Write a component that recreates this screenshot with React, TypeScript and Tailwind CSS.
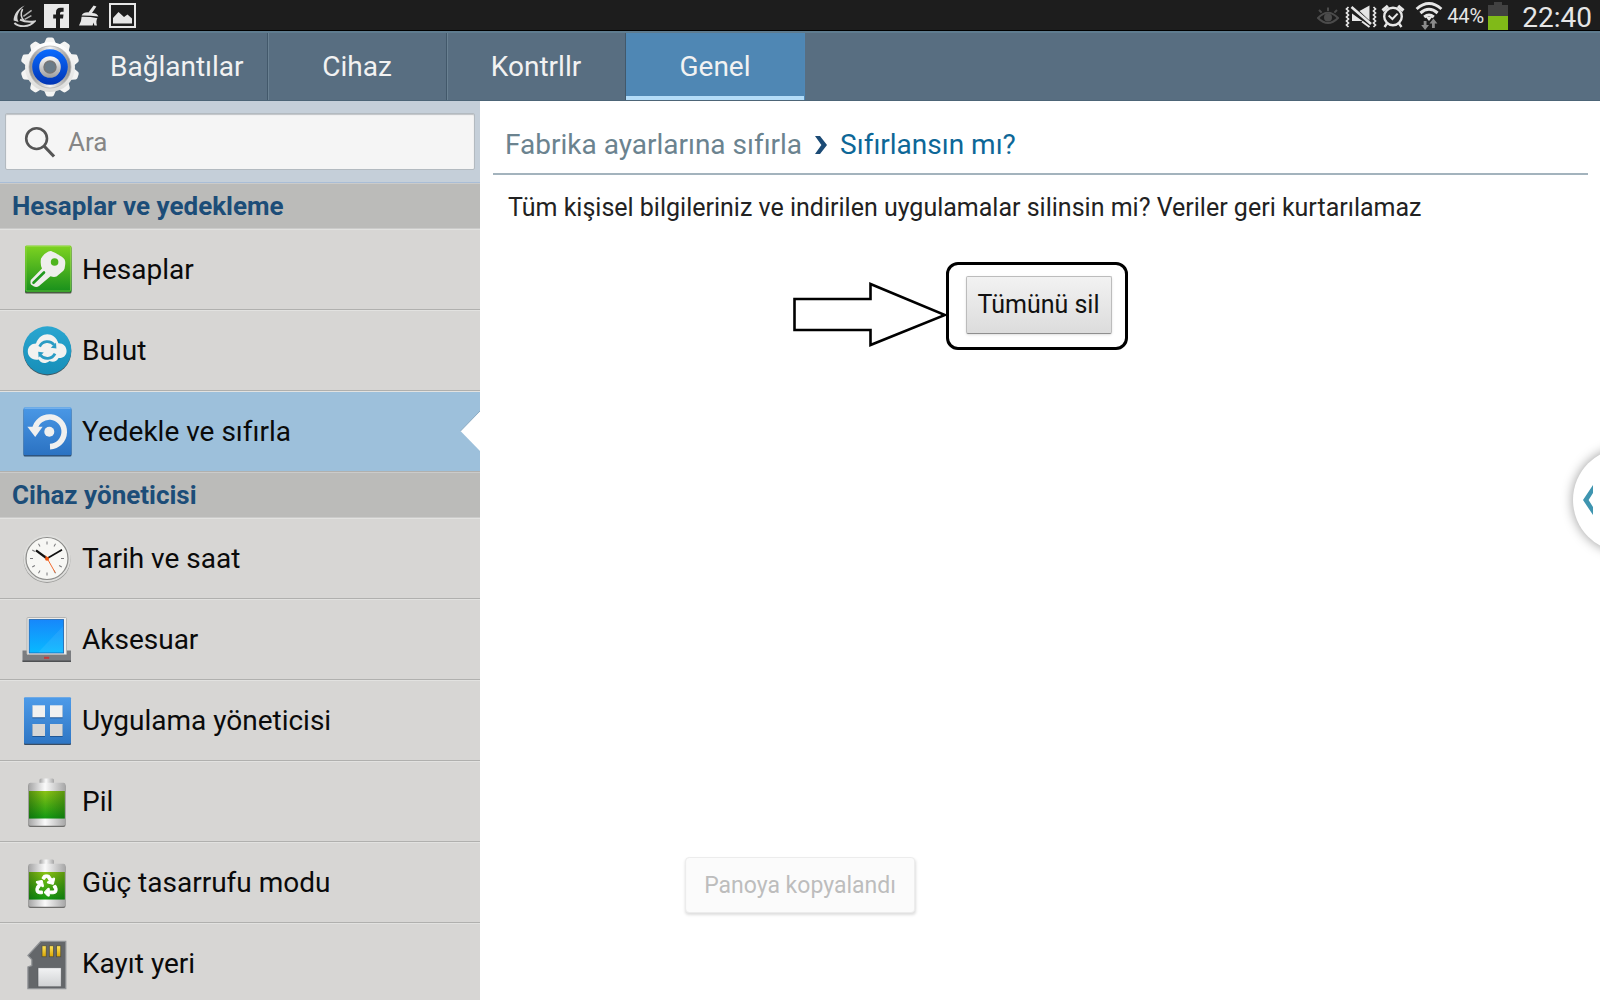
import type { ReactNode } from "react";
import { FaRecycle } from "react-icons/fa";

interface SettingItem {
  label: string;
  icon: ReactNode;
  selected?: boolean;
}

interface SettingSection {
  title: string;
  items: SettingItem[];
}

interface GradientProps {
  id: string;
  from: string;
  to: string;
}

const Gradient: React.FC<GradientProps> = ({ id, from, to }) => (
  <linearGradient id={id} x1="0" y1="0" x2="0" y2="1">
    <stop offset="0" stopColor={from} />
    <stop offset="1" stopColor={to} />
  </linearGradient>
);

const ItemSvg: React.FC<{ children: ReactNode }> = ({ children }) => (
  <svg className="h-[52px] w-[50px] shrink-0" viewBox="0 0 50 52" aria-hidden="true">
    {children}
  </svg>
);

const KeyIcon = () => (
  <ItemSvg>
    <defs>
      <Gradient id="key-bg" from="#7ed321" to="#178f1c" />
    </defs>
    <rect x="3" y="2.5" width="46.5" height="47" rx="1.5" fill="#4a5a42" />
    <rect x="3" y="1.5" width="46.5" height="46.5" rx="1.5" fill="url(#key-bg)" />
    <rect x="4" y="2.5" width="44.5" height="44.5" rx="1" fill="none" stroke="#a6e25c" strokeOpacity="0.5" />
    <path
      d="M28.6 7 C30 7 41 12.5 42.6 15.5 C43.6 17.5 43.4 20 42.6 24.5 Q42 26.5 40.5 27.5 L34.5 32.5 Q32 33.5 28.5 32.3 L17 42 Q15 43.4 12 42.6 L9 40.6 Q8 38.5 8.8 36 L20 24.5 Q18 20.5 19 14.5 Q23 8 28.6 7Z"
      fill="#eeeeec"
    />
    <circle cx="32.6" cy="18" r="3.8" fill="#4fb51f" />
    <path d="M11.5 38.8 L22 28.5" stroke="#219a1f" strokeWidth="2.6" strokeLinecap="round" />
  </ItemSvg>
);

const CloudIcon = () => (
  <ItemSvg>
    <defs>
      <Gradient id="cloud-bg" from="#2aa6d0" to="#178fb9" />
    </defs>
    <circle cx="25.3" cy="26.4" r="24" fill="#3f5a66" />
    <circle cx="25.3" cy="25.3" r="24" fill="url(#cloud-bg)" />
    <path
      d="M14 18.6 C16 12 21 9.2 25.3 9.2 C30 9.2 34.6 12.2 36.4 18.2 C41 18 44.6 21.4 44.6 26 C44.6 30.6 41 33.4 36.6 33 C35 36.4 31.4 37.6 27.4 36 C23.6 39.4 18.4 38.4 16.8 34.6 C10.4 36 5.8 31.8 5.8 26.6 C5.8 21.8 9.4 18.6 14 18.6Z"
      fill="#f2f2f0"
    />
    <g fill="none" stroke="#2a9cc4" strokeWidth="2.8">
      <path d="M17.6 21.6 A8.6 8.6 0 0 1 32.2 20" />
      <path d="M33 28.6 A8.6 8.6 0 0 1 18.4 30" />
    </g>
    <path d="M28.8 22.8 L34.4 23.4 L34 17.8Z M21.8 27.4 L16.2 26.8 L16.6 32.4Z" fill="#2a9cc4" />
  </ItemSvg>
);

const ResetIcon = () => (
  <ItemSvg>
    <defs>
      <Gradient id="reset-bg" from="#4a98e6" to="#2b72c2" />
    </defs>
    <rect x="1.5" y="2.5" width="48" height="48" rx="1.5" fill="#2d4a6a" />
    <rect x="1.5" y="1.3" width="48" height="48" rx="1.5" fill="url(#reset-bg)" />
    <path d="M2.5 2.2 H48.5" stroke="#a4ccf2" strokeOpacity="0.7" />
    <path d="M12.8 23.5 A14.8 14.8 0 1 1 28 40.6" fill="none" stroke="#f0f0ef" strokeWidth="5.6" />
    <path d="M5.4 20.8 H20.6 L13.2 31Z" fill="#f0f0ef" />
    <circle cx="27.3" cy="25.8" r="5" fill="#f0f0ef" />
  </ItemSvg>
);

const ClockIcon = () => (
  <ItemSvg>
    <circle cx="25" cy="26.4" r="23.5" fill="#9a9a98" />
    <circle cx="25" cy="25.5" r="23.5" fill="#dededc" />
    <circle cx="25" cy="25.5" r="21" fill="#f7f7f4" stroke="#8c8c8a" strokeWidth="1.2" />
    {Array.from({ length: 12 }, (_, i) => (
      <path key={i} d="M25 8.5 V11.5" stroke="#77777a" transform={`rotate(${i * 30} 25 25.5)`} />
    ))}
    <path d="M25 25.5 L14 17.3" stroke="#111" strokeWidth="2.2" />
    <path d="M25 25.5 L40 16.8" stroke="#111" strokeWidth="1.7" />
    <path d="M23.6 22.6 L33.2 39.6" stroke="#f26a2e" />
    <circle cx="25" cy="25.8" r="2" fill="#f2560f" />
  </ItemSvg>
);

const AccessoryIcon = () => (
  <ItemSvg>
    <defs>
      <Gradient id="screen" from="#1787fb" to="#08b9ff" />
    </defs>
    <path d="M0.5 36.5 H5 V40.5 H44.5 V36.5 H49 V47.5 H0.5Z" fill="#7b7d80" />
    <path d="M0.5 47.3 H49" stroke="#4e5052" strokeWidth="1.4" />
    <rect x="5" y="3.5" width="39.5" height="37" rx="1" fill="#ededeb" stroke="#b5b5b3" />
    <rect x="7.2" y="5.6" width="34.4" height="33.4" fill="url(#screen)" stroke="#1b62ad" strokeWidth="0.8" />
    <path d="M41.2 12 V38.6 H16Z" fill="#fff" fillOpacity="0.07" />
    <rect x="22" y="42.8" width="5.2" height="2" fill="#c23a3a" />
  </ItemSvg>
);

const AppsIcon = () => (
  <ItemSvg>
    <defs>
      <Gradient id="apps-bg" from="#4d9be9" to="#2e76c4" />
    </defs>
    <rect x="2" y="3" width="47" height="47" rx="1" fill="#3a4d62" />
    <rect x="2" y="2.2" width="47" height="46.6" rx="1" fill="url(#apps-bg)" />
    <g fill="#1f5796">
      <rect x="10.4" y="11.3" width="12.6" height="12" />
      <rect x="28" y="11.3" width="12.6" height="12" />
      <rect x="10.4" y="30" width="12.6" height="12" />
      <rect x="28" y="30" width="12.6" height="12" />
    </g>
    <g fill="#f1f1f0">
      <rect x="10.4" y="10.3" width="12.6" height="12" />
      <rect x="28" y="10.3" width="12.6" height="12" />
    </g>
    <g fill="#d6d6d5">
      <rect x="10.4" y="29" width="12.6" height="12" />
      <rect x="28" y="29" width="12.6" height="12" />
    </g>
  </ItemSvg>
);

const BatteryBody: React.FC<{ id: string }> = ({ id }) => (
  <>
    <defs>
      <linearGradient id={`${id}-metal`} x1="0" y1="0" x2="1" y2="0">
        <stop offset="0" stopColor="#a3a3a3" />
        <stop offset="0.45" stopColor="#fafafa" />
        <stop offset="1" stopColor="#a6a6a6" />
      </linearGradient>
      <Gradient id={`${id}-charge`} from="#8cc414" to="#129a12" />
      <linearGradient id={`${id}-shade`} x1="0" y1="0" x2="1" y2="0">
        <stop offset="0" stopColor="#063f06" stopOpacity="0.4" />
        <stop offset="0.45" stopColor="#063f06" stopOpacity="0" />
        <stop offset="1" stopColor="#063f06" stopOpacity="0.35" />
      </linearGradient>
    </defs>
    <rect x="17.5" y="2.5" width="14.5" height="6" rx="1.5" fill={`url(#${id}-metal)`} />
    <rect x="6.3" y="8" width="37.2" height="43" rx="2" fill="#6e6e6c" />
    <rect x="6.3" y="6.8" width="37.2" height="43" rx="2" fill={`url(#${id}-metal)`} />
    <rect x="7" y="15" width="35.8" height="27.5" fill={`url(#${id}-charge)`} />
    <rect x="7" y="15" width="35.8" height="27.5" fill={`url(#${id}-shade)`} />
  </>
);

const BatteryIcon = () => (
  <ItemSvg>
    <BatteryBody id="battery" />
  </ItemSvg>
);

const PowerSavingIcon = () => (
  <ItemSvg>
    <BatteryBody id="saver" />
    <FaRecycle x="13.5" y="17.5" size={22} color="#ffffff" stroke="#ffffff" strokeWidth="24" />
  </ItemSvg>
);

const StorageIcon = () => (
  <ItemSvg>
    <defs>
      <Gradient id="sd-pin" from="#ffe45c" to="#d9a400" />
      <Gradient id="sd-label" from="#f2f3f4" to="#cfd1d3" />
    </defs>
    <path
      d="M18.8 3.4 H43.8 V50.6 H5.9 V29 L9.8 27.6 V21.6 L5.9 17.6Z"
      fill="#64676a"
      stroke="#909396"
      strokeWidth="1.2"
    />
    <g fill="url(#sd-pin)" stroke="#4a4a3c" strokeWidth="0.7">
      <rect x="20" y="7.8" width="4.2" height="11" />
      <rect x="27.3" y="7.8" width="4.2" height="11" />
      <rect x="34.6" y="7.8" width="4.2" height="11" />
    </g>
    <rect x="16" y="29.8" width="23.2" height="19" fill="url(#sd-label)" stroke="#55585a" strokeWidth="0.6" />
  </ItemSvg>
);

const GearIcon = () => (
  <svg className="size-[60px] shrink-0" viewBox="0 0 60 60" aria-hidden="true">
    <defs>
      <Gradient id="gear-body" from="#ffffff" to="#dcdcda" />
      <linearGradient id="gear-side" x1="0" y1="0" x2="1" y2="0">
        <stop offset="0" stopColor="#8b8b8b" />
        <stop offset="0.5" stopColor="#f4f4f4" />
        <stop offset="1" stopColor="#8b8b8b" />
      </linearGradient>
      <Gradient id="gear-blue" from="#0a6bff" to="#0034b4" />
      <Gradient id="gear-hub" from="#fafafa" to="#9d9d9d" />
    </defs>
    <g fill="#f4f4f3">
      {Array.from({ length: 10 }, (_, i) => (
        <path key={i} d="M23.5 8 L26 2 Q26.3 0.6 28 0.5 H32 Q33.7 0.6 34 2 L36.5 8Z" transform={`rotate(${i * 36} 30 30)`} />
      ))}
    </g>
    <circle cx="30" cy="30" r="25" fill="url(#gear-body)" />
    <circle cx="30" cy="30" r="21" fill="url(#gear-side)" stroke="#b4b4b4" strokeWidth="0.8" />
    <circle cx="30" cy="30" r="17.8" fill="url(#gear-blue)" />
    <circle cx="30" cy="30" r="10.8" fill="url(#gear-hub)" />
    <circle cx="30" cy="30" r="6" fill="#6a7b88" stroke="#767676" strokeWidth="1.4" />
  </svg>
);

const SECTIONS: SettingSection[] = [
  {
    title: "Hesaplar ve yedekleme",
    items: [
      { label: "Hesaplar", icon: <KeyIcon /> },
      { label: "Bulut", icon: <CloudIcon /> },
      { label: "Yedekle ve sıfırla", icon: <ResetIcon />, selected: true }
    ]
  },
  {
    title: "Cihaz yöneticisi",
    items: [
      { label: "Tarih ve saat", icon: <ClockIcon /> },
      { label: "Aksesuar", icon: <AccessoryIcon /> },
      { label: "Uygulama yöneticisi", icon: <AppsIcon /> },
      { label: "Pil", icon: <BatteryIcon /> },
      { label: "Güç tasarrufu modu", icon: <PowerSavingIcon /> },
      { label: "Kayıt yeri", icon: <StorageIcon /> }
    ]
  }
];

const TABS = ["Cihaz", "Kontrllr", "Genel"];

const StatusBar = () => (
  <div className="flex h-[31px] shrink-0 items-center justify-between border-b border-black bg-[#1d1d1d] pr-2 pl-3 text-[#e6e6e6]">
    <div className="flex items-center gap-2 pt-px">
      <svg className="size-6" viewBox="0 0 24 24" fill="none" stroke="#d4d4d4" aria-hidden="true">
        <path d="M12.6 1.4 C6 4.5 1.6 10 1.6 16.4 L6.6 18 C3.6 12.5 6.5 6.5 12.6 1.4Z" fill="#d4d4d4" stroke="none" />
        <path d="M10.6 5 C8.2 9.5 9 14.5 12.4 17" strokeWidth="1.6" />
        <path d="M2.4 19 C7 23.4 17 23.6 22.6 17.4 Q14 18.6 8 15.6" strokeWidth="1.8" />
        <path d="M19.6 6.4 L11.4 12.4 M19.4 11.6 L12.6 15.4" stroke="#b0b0b0" strokeWidth="1.5" />
      </svg>
      <svg className="h-6 w-[25px]" viewBox="0 0 25 24" aria-hidden="true">
        <rect width="25" height="24" fill="#e8e8e8" />
        <path d="M12 24 V14.5 H9.2 V10.6 H12 V8.3 Q12 3.8 16.5 3.8 H19.6 V7.8 H17.6 Q16 7.8 16 9.4 V10.6 H19.5 L19 14.5 H16 V24Z" fill="#1d1d1d" />
      </svg>
      <svg className="size-6" viewBox="0 0 24 24" fill="#e6e6e6" aria-hidden="true">
        <path d="M16.6 1.4 L19.4 2.4 L15 9 Q20.6 9.4 21.4 12.6 Q14 11.4 4.6 11.4 Q6.6 8 11.4 8.4Z" />
        <path d="M4.6 12.8 Q13 12.6 20.4 14.2 Q18.6 17 20 21.6 H17.4 L16.6 18.6 L15.6 21.6 H2 Q4.6 17.6 4.6 12.8Z" />
      </svg>
      <svg className="h-[25px] w-[27px]" viewBox="0 0 27 25" aria-hidden="true">
        <rect x="1" y="1" width="25" height="23" fill="none" stroke="#e6e6e6" strokeWidth="2" />
        <path d="M4 20.5 V15 L9.5 9 L15 14 L18.5 11.6 L23 15.5 V20.5Z" fill="#e6e6e6" />
      </svg>
    </div>
    <div className="flex items-center pt-px">
      <svg className="mr-1.5 size-[22px]" viewBox="0 0 22 22" fill="none" stroke="#4b4b4b" strokeWidth="2" aria-hidden="true">
        <path d="M1 13 Q11 2.5 21 13 Q11 23 1 13Z" />
        <circle cx="11" cy="12.6" r="3" fill="#4b4b4b" />
        <path d="M2 5 L4.6 7.6 M11 2.5 V6 M20 5 L17.4 7.6" />
      </svg>
      <svg className="mr-1 h-6 w-8" viewBox="0 0 32 24" fill="none" aria-hidden="true">
        <path d="M3.5 3 L1.5 5 L3.5 7 L1.5 9 L3.5 11 L1.5 13 L3.5 15 L1.5 17 L3.5 19 L1.5 21 L3.5 23" stroke="#e6e6e6" strokeWidth="1.7" />
        <path d="M28.5 3 L30.5 5 L28.5 7 L30.5 9 L28.5 11 L30.5 13 L28.5 15 L30.5 17 L28.5 19 L30.5 21 L28.5 23" stroke="#e6e6e6" strokeWidth="1.7" />
        <path d="M7 9.5 V17 H17.5Z M14.5 7 L24.5 1.6 V16.5Z" fill="#e6e6e6" />
        <path d="M6.5 3 L26 20" stroke="#e6e6e6" strokeWidth="2.6" />
        <path d="M17 17.5 L24.5 23" stroke="#e6e6e6" strokeWidth="2" />
      </svg>
      <svg className="mr-2.5 size-6" viewBox="0 0 24 24" fill="none" stroke="#e6e6e6" aria-hidden="true">
        <circle cx="12" cy="12.5" r="8.8" strokeWidth="2.4" />
        <path d="M7.6 11.6 L11.4 15 L16.6 9.6" strokeWidth="2" />
        <path d="M1.6 6.6 L7 2 M22.4 6.6 L17 2" strokeWidth="3.4" />
        <path d="M6 19.5 L3.5 23 M18 19.5 L20.5 23" strokeWidth="2.4" />
      </svg>
      <svg className="mr-1 h-[29px] w-7" viewBox="0 0 28 29" fill="none" aria-hidden="true">
        <g stroke="#e6e6e6" strokeWidth="3">
          <path d="M1.6 8 Q14 -3 26.4 8" />
          <path d="M5.4 12 Q14 4.6 22.6 12" />
          <path d="M9.2 16 Q14 12 18.8 16" />
        </g>
        <path d="M10.8 16 L14 20 L17.2 16Z" fill="#e6e6e6" />
        <path d="M8.7 20 H11.5 V24 H14 L10.1 29 L6.2 24 H8.7Z M17 27 H19.8 V22.5 H22.4 L18.4 17.5 L14.5 22.5 H17Z" fill="#8c8c8c" />
      </svg>
      <span className="mr-1 text-[20px] leading-6">44%</span>
      <svg className="mr-3.5 h-7 w-5" viewBox="0 0 20 28" aria-hidden="true">
        <path d="M0 3 H6 V0 H14 V3 H20 V14 H0Z" fill="#414141" />
        <rect y="14" width="20" height="14" fill="#80ba18" />
      </svg>
      <span className="pt-1 text-[28px] leading-7">22:40</span>
    </div>
  </div>
);

const Sidebar = () => (
  <aside className="w-[480px] shrink-0 overflow-hidden bg-[#d7d6d4]">
    <div className="h-[82px] border-b border-[#a9bdd6] bg-[#c5cfd9] px-[5px] pt-3">
      <label className="flex h-[57px] items-center gap-3 rounded-xs border border-[#b3bac0] bg-[#f5f5f5] pl-[18px] shadow-[inset_0_1px_1px_#bfc3c6]">
        <svg className="size-8" viewBox="0 0 32 32" fill="none" stroke="#555" aria-hidden="true">
          <circle cx="12.6" cy="12.6" r="10.4" strokeWidth="2.6" />
          <path d="M20 20 L30 30.5" strokeWidth="3.2" />
        </svg>
        <input
          type="search"
          aria-label="Ara"
          placeholder="Ara"
          className="min-w-0 flex-1 bg-transparent pt-0.5 text-[26px] outline-none placeholder:text-[#868686]"
        />
      </label>
    </div>
    <nav>
      {SECTIONS.map((section) => (
        <section key={section.title}>
          <h2 className="flex h-[46px] items-center border-y border-[#cbcbca] bg-[#bbbbb9] px-3 text-[26px] font-bold text-[#1c4d78]">
            {section.title}
          </h2>
          <ul>
            {section.items.map((item) => (
              <li key={item.label} className="relative">
                <button
                  type="button"
                  className={`flex h-[81px] w-full items-center gap-2.5 border-t border-b border-t-[#e2e2e0] border-b-[#b0b0ae] pl-[22px] text-left text-[28px] text-[#0a0a0a] ${
                    item.selected ? "bg-[#9dc0db]" : ""
                  }`}
                >
                  {item.icon}
                  <span className="pt-px">{item.label}</span>
                </button>
                {item.selected && (
                  <svg className="absolute top-5 right-0 h-10 w-5" viewBox="0 0 20 40" aria-hidden="true">
                    <path d="M20 0 L0.5 20 L20 40Z" fill="#fff" />
                    <path d="M20 0 L0.5 20" stroke="#8aa9c1" strokeWidth="1" />
                  </svg>
                )}
              </li>
            ))}
          </ul>
        </section>
      ))}
    </nav>
  </aside>
);

const ResetPanel = () => (
  <main className="min-w-0 flex-1 bg-white pr-3 pl-[13px]">
    <div className="flex h-[74px] items-center border-b-2 border-[#a3b3bd] px-3 pt-4 text-[28px]">
      <a href="#factory-reset" className="text-[#6b838f]">
        Fabrika ayarlarına sıfırla
      </a>
      <svg className="mx-3 h-[18px] w-3.5" viewBox="0 0 14 18" aria-hidden="true">
        <path d="M1 0 H6 L13 9 L6 18 H1 L7.4 9Z" fill="#1b4a75" />
      </svg>
      <h1 className="text-[#0d6797]">Sıfırlansın mı?</h1>
    </div>
    <p className="px-[15px] pt-[17px] text-[25px] leading-8 text-[#222]">
      Tüm kişisel bilgileriniz ve indirilen uygulamalar silinsin mi? Veriler geri kurtarılamaz
    </p>
    <div className="mt-13 flex justify-center pr-1">
      <div className="relative">
        <button
          type="button"
          className="h-[58px] w-[146px] rounded-xs border border-[#bcbcbc] border-b-[#8f8f8f] bg-linear-to-b from-[#f2f2f2] to-[#dcdcdc] text-[25px] text-[#111] shadow-sm"
        >
          Tümünü sil
        </button>
        <div className="pointer-events-none absolute -top-3.5 -right-4 -bottom-4 -left-5 rounded-xl border-3 border-black" />
        <svg className="absolute top-0 right-[165px] h-[72px] w-[154px]" viewBox="0 0 154 72" aria-hidden="true">
          <path d="M1.5 23 H77.5 V8 L152 39 L77.5 69 V54 H1.5Z" fill="#fff" stroke="#000" strokeWidth="2.6" />
        </svg>
      </div>
    </div>
  </main>
);

export default function App() {
  return (
    <div className="relative flex h-screen flex-col overflow-hidden bg-white font-['Roboto',sans-serif]">
      <StatusBar />
      <header className="flex h-[70px] shrink-0 border-t-2 border-b border-t-[#5f7c8f] border-b-[#4d6577] bg-[#586e81] text-[28px] text-[#f2f2f2] [text-shadow:0_2px_2px_#2c3b47]">
        <button type="button" className="flex w-[268px] items-center gap-[30px] border-r border-[#42586a] pl-5">
          <GearIcon />
          Bağlantılar
        </button>
        {TABS.map((tab) => (
          <button
            key={tab}
            type="button"
            className={`w-[179px] border-r ${
              tab === "Genel"
                ? "border-[#5088b6] bg-[#4f87b4] shadow-[inset_0_-4px_#b3dcf8]"
                : "border-[#42586a] shadow-[inset_1px_0_#6a8192]"
            }`}
          >
            {tab}
          </button>
        ))}
      </header>
      <div className="flex min-h-0 flex-1">
        <Sidebar />
        <ResetPanel />
      </div>
      <button
        type="button"
        aria-label="Paneli aç"
        className="absolute top-1/2 -right-[77px] flex size-26 -translate-y-1/2 items-center rounded-full bg-white pl-2.5 shadow-[0_0_12px_#0006]"
      >
        <svg className="h-[30px] w-2.5" viewBox="0 0 10 30" aria-hidden="true">
          <path d="M10 0 V8 L5.6 15 L10 22 V30 L0 15Z" fill="#3f95b0" />
        </svg>
      </button>
      <div
        role="status"
        className="absolute bottom-[87px] left-1/2 flex h-14 -translate-x-1/2 items-center rounded-sm border border-[#ececec] bg-[#fbfbfb] px-[18px] pt-0.5 text-[23px] whitespace-nowrap text-[#bdbdbd] shadow-[0_2px_3px_#0002]"
      >
        Panoya kopyalandı
      </div>
    </div>
  );
}
